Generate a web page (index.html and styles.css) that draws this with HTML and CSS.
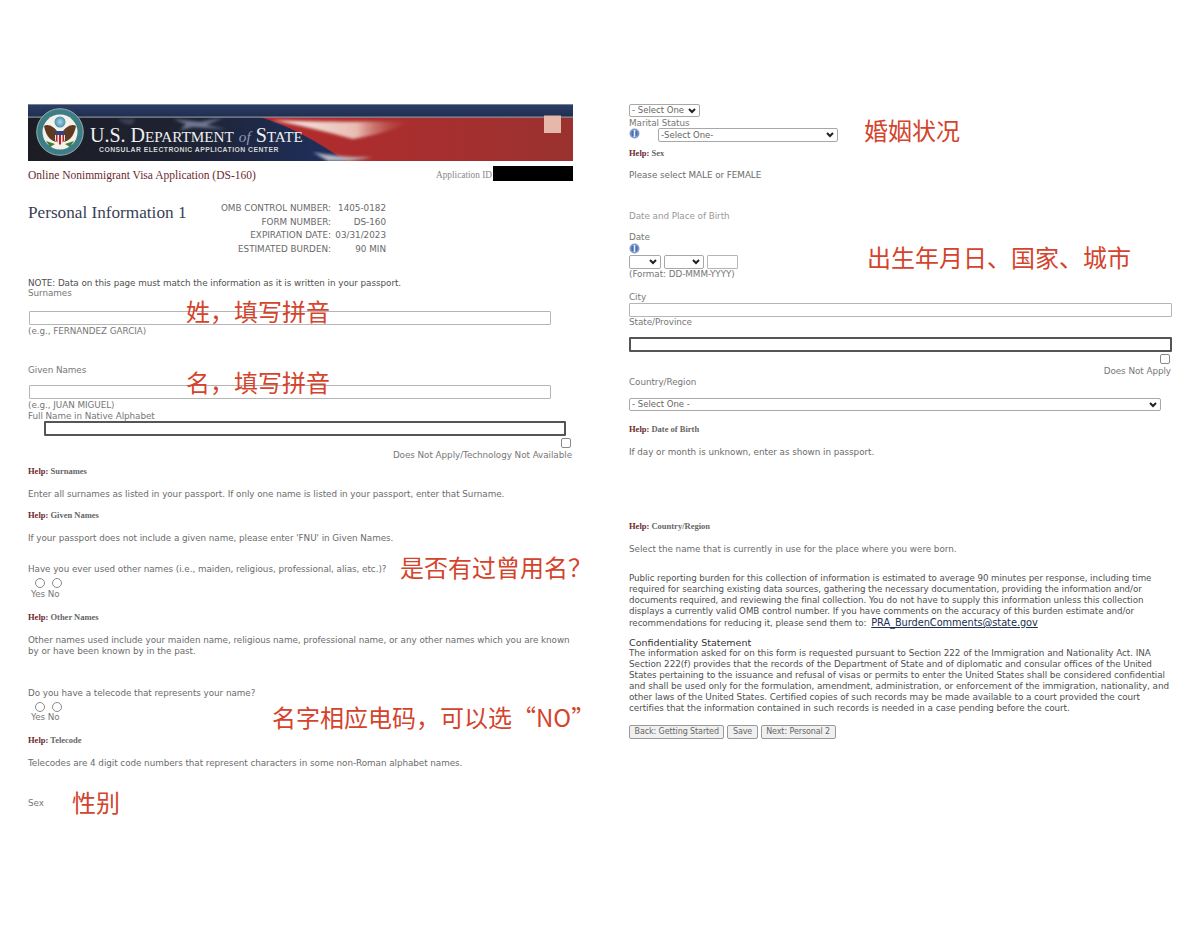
FILE: index.html
```html
<!DOCTYPE html>
<html lang="en">
<head>
<meta charset="utf-8">
<title>DS-160 Personal Information 1</title>
<link rel="stylesheet" href="styles.css">
</head>
<body>
<main class="sheet">
<section class="col col-left">
  <svg class="banner" viewBox="0 0 545 57" role="img" aria-label="U.S. Department of State">
    <defs>
      <linearGradient id="top" x1="0" y1="0" x2="0" y2="1"><stop offset="0" stop-color="#2c3f66"/><stop offset="1" stop-color="#1f2f50"/></linearGradient>
      <linearGradient id="base" x1="0" y1="0" x2="1" y2="0"><stop offset="0" stop-color="#1c1d24"/><stop offset=".3" stop-color="#1e2334"/><stop offset=".55" stop-color="#1f2f5c"/></linearGradient>
      <linearGradient id="red" x1="0" y1="0" x2="1" y2="0"><stop offset="0" stop-color="#b52a2c"/><stop offset="1" stop-color="#9a3230"/></linearGradient>
      <linearGradient id="white" x1="0" y1="0" x2="1" y2="0"><stop offset="0" stop-color="#f4efeb"/><stop offset=".6" stop-color="#e9bcb2"/><stop offset="1" stop-color="#b53a36" stop-opacity="0"/></linearGradient>
      <filter id="soft"><feGaussianBlur stdDeviation="1.6"/></filter>
      <radialGradient id="sky" cx=".5" cy=".5" r=".5"><stop offset="0" stop-color="#a8d6e4"/><stop offset="1" stop-color="#4b8fb0"/></radialGradient>
    </defs>
    <rect width="545" height="57" fill="url(#base)"/>
    <path d="M232 13H545V57H318C295 42 270 25 232 13Z" fill="url(#red)"/>
    <path d="M244 16C285 18 340 18 385 17C370 24 350 31 325 35C300 28 270 21 244 16Z" fill="url(#white)" filter="url(#soft)"/>
    <path d="M285 48C300 52 330 54 345 53C330 56 320 57 312 57H300Z" fill="#b9b9c2" filter="url(#soft)"/>
    <path d="M145 15L172 18L195 14L178 21L198 25L165 23L152 26L158 20Z" fill="#6f7890" filter="url(#soft)"/>
    <path d="M90 15H108L103 21L95 19Z" fill="#3b4156" filter="url(#soft)"/>
    <rect width="545" height="12.5" fill="url(#top)"/>
    <rect width="545" height=".8" fill="#8c93a5"/>
    <rect y="12.5" width="545" height="1.2" fill="#8d93a3"/>
    <rect x="516" y="11.500" width="17" height="17.500" fill="#e6b7ab"/>
    <circle cx="32" cy="28" r="23.300" fill="#3f7d86"/>
    <circle cx="32" cy="28" r="23.300" fill="none" stroke="#a9c6c4" stroke-width=".8"/>
    <circle cx="32" cy="28" r="17.500" fill="#f3f1e8"/>
    <circle cx="32" cy="18" r="5.500" fill="url(#sky)"/>
    <path d="M16 22C20 19 26 23 29 27L29.500 38C24 38 18 33 16 22Z" fill="#5d3a20"/>
    <path d="M48 22C44 19 38 23 35 27L34.500 38C40 38 46 33 48 22Z" fill="#5d3a20"/>
    <path d="M27 27H37V35C37 38 34.500 40 32 41C29.500 40 27 38 27 35Z" fill="#f0e8e0"/>
    <path d="M28 31H29.500V38.500L28 37ZM31 31H33V40.500H31ZM34.500 31H36V37L34.500 38.500Z" fill="#b3262d"/>
    <rect x="27" y="27" width="10" height="4" fill="#2e4480"/>
    <path d="M27 40L18 37L22 43Z" fill="#3f7a40"/>
    <path d="M37 40L46 37L42 43Z" fill="#3f7a40"/>
    <text class="banner-title" x="62" y="37.700">U.S. D<tspan class="banner-small">EPARTMENT</tspan> <tspan class="banner-of">of</tspan> S<tspan class="banner-small">TATE</tspan></text>
    <text class="banner-sub" x="71" y="47.500">CONSULAR ELECTRONIC APPLICATION CENTER</text>
  </svg>

  <div class="app-row">
    <span class="app-name">Online Nonimmigrant Visa Application (DS-160)</span>
    <span class="app-id"><span class="app-id-label">Application ID</span><span class="redaction"></span></span>
  </div>

  <div class="title-row">
    <h1 class="page-title">Personal Information 1</h1>
    <dl class="omb">
      <dt>OMB CONTROL NUMBER:</dt><dd>1405-0182</dd>
      <dt>FORM NUMBER:</dt><dd>DS-160</dd>
      <dt>EXPIRATION DATE:</dt><dd>03/31/2023</dd>
      <dt>ESTIMATED BURDEN:</dt><dd>90 MIN</dd>
    </dl>
  </div>

  <p class="t dark note">NOTE: Data on this page must match the information as it is written in your passport.</p>
  <p class="t">Surnames</p>
  <div class="field-a"><input class="input wide" type="text" aria-label="Surnames"><span class="mark mark-1">姓，填写拼音</span></div>
  <p class="t">(e.g., FERNANDEZ GARCIA)</p>
  <p class="t given">Given Names</p>
  <div class="field-b"><input class="input wide" type="text" aria-label="Given Names"><span class="mark mark-2">名，填写拼音</span></div>
  <p class="t">(e.g., JUAN MIGUEL)</p>
  <p class="t">Full Name in Native Alphabet</p>
  <input class="input focus native" type="text" aria-label="Full Name in Native Alphabet">
  <div class="check-row"><input class="check" type="checkbox" aria-label="Does Not Apply"></div>
  <p class="t right dna">Does Not Apply/Technology Not Available</p>

  <p class="help help-1"><b>Help:</b> Surnames</p>
  <p class="t dim help-text tall">Enter all surnames as listed in your passport. If only one name is listed in your passport, enter that Surname.</p>
  <p class="help help-2"><b>Help:</b> Given Names</p>
  <p class="t dim help-text tall">If your passport does not include a given name, please enter 'FNU' in Given Names.</p>

  <div class="q q-1">
    <p class="t dim">Have you ever used other names (i.e., maiden, religious, professional, alias, etc.)?</p>
    <span class="mark mark-3">是否有过曾用名？</span>
  </div>
  <div class="radios"><span class="radio"></span><span class="radio"></span></div>
  <p class="t yesno">Yes No</p>
  <p class="help help-3"><b>Help:</b> Other Names</p>
  <p class="t dim help-text tall">Other names used include your maiden name, religious name, professional name, or any other names which you are known<br>by or have been known by in the past.</p>

  <div class="q q-2">
    <p class="t dim">Do you have a telecode that represents your name?</p>
  </div>
  <div class="radios radios-2"><span class="radio"></span><span class="radio"></span></div>
  <div class="q"><p class="t yesno">Yes No</p><span class="mark mark-4">名字相应电码，可以选“NO”</span></div>
  <p class="help help-4"><b>Help:</b> Telecode</p>
  <p class="t dim help-text tall">Telecodes are 4 digit code numbers that represent characters in some non-Roman alphabet names.</p>
  <div class="q sex"><p class="t">Sex</p><span class="mark mark-5">性别</span></div>
</section>

<section class="col col-right">
  <select class="select sel-one" aria-label="Sex"><option>- Select One -</option></select>
  <p class="t marital-label">Marital Status</p>
  <div class="marital">
    <svg class="info" viewBox="0 0 11 11" aria-hidden="true"><circle cx="5.500" cy="5.500" r="5" fill="#7f9ccc"/><circle cx="5.500" cy="5.500" r="3.200" fill="#4a6cb0"/><rect x="4.700" y="2" width="1.600" height="7" fill="#e8eef8"/></svg>
    <select class="select sel-marital" aria-label="Marital Status"><option>-Select One-</option></select>
    <span class="mark mark-6">婚姻状况</span>
  </div>
  <p class="help help-5"><b>Help:</b> Sex</p>
  <p class="t dim help-text">Please select MALE or FEMALE</p>
  <p class="t pale dob-head">Date and Place of Birth</p>
  <p class="t date-label">Date</p>
  <svg class="info info-block" viewBox="0 0 11 11" aria-hidden="true"><circle cx="5.500" cy="5.500" r="5" fill="#7f9ccc"/><circle cx="5.500" cy="5.500" r="3.200" fill="#4a6cb0"/><rect x="4.700" y="2" width="1.600" height="7" fill="#e8eef8"/></svg>
  <div class="date-row">
    <select class="select sel-day" aria-label="Day"><option></option></select>
    <select class="select sel-month" aria-label="Month"><option></option></select>
    <input class="input year" type="text" aria-label="Year">
    <span class="mark mark-7">出生年月日、国家、城市</span>
  </div>
  <p class="t">(Format: DD-MMM-YYYY)</p>
  <p class="t city">City</p>
  <input class="input full" type="text" aria-label="City">
  <p class="t state">State/Province</p>
  <input class="input focus state-input" type="text" aria-label="State/Province">
  <div class="check-row"><input class="check" type="checkbox" aria-label="Does Not Apply"></div>
  <p class="t right dna">Does Not Apply</p>
  <p class="t">Country/Region</p>
  <select class="select sel-country" aria-label="Country/Region"><option>- Select One -</option></select>
  <p class="help help-6"><b>Help:</b> Date of Birth</p>
  <p class="t dim help-text tall">If day or month is unknown, enter as shown in passport.</p>
  <p class="help help-7"><b>Help:</b> Country/Region</p>
  <p class="t dim help-text tall">Select the name that is currently in use for the place where you were born.</p>
  <p class="t dark burden">Public reporting burden for this collection of information is estimated to average 90 minutes per response, including time<br>required for searching existing data sources, gathering the necessary documentation, providing the information and/or<br>documents required, and reviewing the final collection. You do not have to supply this information unless this collection<br>displays a currently valid OMB control number. If you have comments on the accuracy of this burden estimate and/or<br>recommendations for reducing it, please send them to: <a class="mail" href="#">PRA_BurdenComments@state.gov</a></p>
  <h2 class="conf-title">Confidentiality Statement</h2>
  <p class="t dark">The information asked for on this form is requested pursuant to Section 222 of the Immigration and Nationality Act. INA<br>Section 222(f) provides that the records of the Department of State and of diplomatic and consular offices of the United<br>States pertaining to the issuance and refusal of visas or permits to enter the United States shall be considered confidential<br>and shall be used only for the formulation, amendment, administration, or enforcement of the immigration, nationality, and<br>other laws of the United States. Certified copies of such records may be made available to a court provided the court<br>certifies that the information contained in such records is needed in a case pending before the court.</p>
  <div class="buttons">
    <button class="btn" type="button">Back: Getting Started</button>
    <button class="btn" type="button">Save</button>
    <button class="btn" type="button">Next: Personal 2</button>
  </div>
</section>
</main>
</body>
</html>
```
FILE: styles.css
```css
* { box-sizing: border-box; }
html, body { margin: 0; padding: 0; background: #fff; }
body { width: 1200px; height: 927px; overflow: hidden; font-family: "DejaVu Sans", sans-serif; color: #6a6a6a; }
p, h1, h2, dl, dd { margin: 0; }

.sheet { display: grid; grid-template-columns: 545px 543px; column-gap: 56px; padding: 104px 0 0 28px; }
.col { display: flex; flex-direction: column; align-items: flex-start; position: relative; }

.t { font-size: 8.800px; line-height: 11px; color: #777; white-space: nowrap; letter-spacing: -0.05px; }
.dim { color: #6c6c6c; }
.dark { color: #4f4f4f; }
.pale { color: #999; }
.right { align-self: flex-end; padding-right: 1px; }

.banner { display: block; width: 545px; height: 57px; }
.banner-title { font-family: "Liberation Serif", serif; font-size: 20px; fill: #f0f0f0; }
.banner-small { font-size: 15.200px; }
.banner-of { font-style: italic; font-size: 15.200px; fill: #8e9bb8; }
.banner-sub { font-family: "Liberation Sans", sans-serif; font-weight: 700; font-size: 6.800px; letter-spacing: .48px; fill: #d6d6d6; }

.app-row { width: 545px; display: flex; justify-content: space-between; align-items: center; margin-top: 5px; height: 15px; }
.app-name { font-family: "Liberation Serif", serif; font-size: 11.500px; color: #6b2a2e; padding-top: 2px; }
.app-id { display: flex; align-items: center; }
.app-id-label { font-family: "Liberation Serif", serif; font-size: 9.300px; color: #888; margin-right: 1px; padding-top: 2px; }
.redaction { display: block; width: 80px; height: 15px; background: #000; }

.title-row { display: flex; margin-top: 20px; }
.page-title { width: 158px; padding-top: 2px; font-family: "Liberation Serif", serif; font-weight: 400; font-size: 17.200px; line-height: 20px; color: #3a3f55; white-space: nowrap; }
.omb { width: 200px; padding-top: 1px; display: grid; grid-template-columns: 145px 55px; font-size: 8.800px; line-height: 13.700px; color: #6a6a6a; text-align: right; }
.note { margin-top: 21px; margin-bottom: -1px; }

.field-a { position: relative; margin-top: 12px; margin-bottom: 1px; }
.field-b { position: relative; margin-top: 9px; margin-bottom: 1px; }
.input { display: block; background: #fff; border: 1px solid #b5b5b5; border-radius: 1px; padding: 0; margin: 0; }
.wide { width: 522px; height: 14px; margin-left: 1px; }
.given { margin-top: 28px; }
.focus { border: 2px solid #555; border-radius: 1px; }
.native { width: 522px; height: 15px; margin: -1px 0 0 16px; }
.check-row { width: 100%; display: flex; justify-content: flex-end; height: 13px; padding: 2px 2px 0 0; }
.check { appearance: none; width: 10px; height: 10px; margin: 0; border: 1px solid #8a8a8a; border-radius: 2px; background: #fff; }
.help { font-family: "Liberation Serif", serif; font-weight: 700; font-size: 8.500px; line-height: 11px; color: #666; }
.help b { color: #6b2a2e; }
.help-text { margin-top: 11px; }
.tall { margin-top: 12px; }
.help-1 { margin-top: 5px; }
.help-2 { margin-top: 10px; }
.q { position: relative; }
.q-1 { margin-top: 20px; }
.q-2 { margin-top: 31px; }
.radios { display: flex; gap: 7px; margin: 3px 0 0 7px; height: 11px; }
.radios-2 { margin-top: 3px; height: 10px; }
.radio { display: block; width: 10px; height: 10px; border: 1px solid #8a8a8a; border-radius: 50%; background: #fff; }
.yesno { margin-left: 3px; }
.help-3, .help-4 { margin-top: 12px; }
.sex { margin-top: 29px; }

.mark { position: absolute; font-family: "Noto Sans CJK SC", sans-serif; font-size: 24px; line-height: 26px; color: #d4432c; white-space: nowrap; }
.mark-1 { left: 158px; top: -13px; }
.mark-2 { left: 158px; top: -16px; }
.mark-3 { left: 372px; top: -10px; }
.mark-4 { left: 244px; top: -8px; }
.mark-5 { left: 44px; top: -9px; }
.mark-6 { left: 235px; top: -11px; }
.mark-7 { left: 238px; top: -11px; }

.select { display: block; appearance: none; margin: 0; padding: 0 12px 0 2px; font-family: "DejaVu Sans", sans-serif; font-size: 8.500px; line-height: 11px; color: #666; border: 1px solid #a8a8a8; border-radius: 2px; background: #fff url("data:image/svg+xml,%3Csvg xmlns='http://www.w3.org/2000/svg' width='8' height='6'%3E%3Cpath d='M1 1L4 4L7 1' fill='none' stroke='%23222' stroke-width='2'/%3E%3C/svg%3E") no-repeat right 3px center; }
.sel-one { width: 71px; height: 13px; }
.marital-label { margin-top: 1px; }
.marital { position: relative; display: flex; align-items: flex-start; margin-top: -1px; height: 14px; }
.info { display: block; width: 11px; height: 11px; }
.sel-marital { width: 180px; height: 14px; margin-left: 18px; }
.help-5 { margin-top: 6px; }
.dob-head { margin-top: 30px; }
.date-label { margin-top: 10px; }
.date-row { position: relative; display: flex; gap: 3px; margin-top: 1px; }
.sel-day { width: 32px; height: 14px; }
.sel-month { width: 40px; height: 14px; }
.year { width: 31px; height: 14px; }
.city { margin-top: 12px; }
.full { width: 543px; height: 14px; }
.state { margin-bottom: 9px; }
.state-input { width: 543px; height: 15px; }
.dna { margin-top: 1px; }
.sel-country { width: 532px; height: 13px; margin-top: 10px; }
.help-6 { margin-top: 13px; }
.help-7 { margin-top: 63px; }
.burden { margin-top: 18px; font-size: 8.700px; }
.mail { color: #22304f; text-decoration: underline; font-size: 9.800px; margin-left: 2px; }
.conf-title { margin-top: 8px; font-size: 9.500px; font-weight: 400; line-height: 11px; color: #333; }
.buttons { display: flex; gap: 3px; margin-top: 11px; }
.btn { height: 14px; padding: 0 4.500px; margin: 0; font-family: "DejaVu Sans", sans-serif; font-size: 8px; letter-spacing: -0.1px; line-height: 12px; color: #666; background: #f0f0f0; border: 1px solid #999; border-radius: 2px; white-space: nowrap; }
```
